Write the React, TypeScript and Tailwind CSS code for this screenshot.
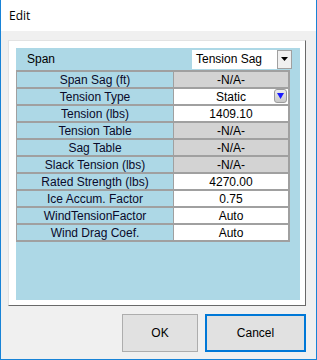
import React from 'react';

type Row = { label: string; value: string; kind: 'gray' | 'white' | 'combo' };

const rows: Row[] = [
    { label: 'Span Sag (ft)', value: '-N/A-', kind: 'gray' },
    { label: 'Tension Type', value: 'Static', kind: 'combo' },
    { label: 'Tension (lbs)', value: '1409.10', kind: 'white' },
    { label: 'Tension Table', value: '-N/A-', kind: 'gray' },
    { label: 'Sag Table', value: '-N/A-', kind: 'gray' },
    { label: 'Slack Tension (lbs)', value: '-N/A-', kind: 'gray' },
    { label: 'Rated Strength (lbs)', value: '4270.00', kind: 'white' },
    { label: 'Ice Accum. Factor', value: '0.75', kind: 'white' },
    { label: 'WindTensionFactor', value: 'Auto', kind: 'white' },
    { label: 'Wind Drag Coef.', value: 'Auto', kind: 'white' },
];

const App: React.FC = () => {
    return (
        <div className="w-[317px] h-[360px] bg-[#f0f0f0] border-x border-b border-[#1883d7] flex flex-col font-['Liberation_Sans',Arial,sans-serif] text-[12px] text-black overflow-hidden">
            {/* Title bar */}
            <div className="h-[31px] bg-white flex items-center pl-[8px] shrink-0">
                <span className="font-['Open_Sans','Noto_Sans',sans-serif] text-[12px]">Edit</span>
            </div>

            {/* Panel */}
            <div className="mt-[9px] ml-[7px] mr-[10px] h-[266px] border-t border-l border-[#e3e3e3] border-r border-b border-r-[#696969] border-b-[#696969] bg-white pl-[7px] pt-[7px] pr-[5px] pb-[5px] flex">
                <div className="flex-1 bg-[#add8e6] flex flex-col">
                    {/* Span row */}
                    <div className="h-[22px] flex items-center justify-between pl-[11px] pr-[8px]">
                        <span>Span</span>
                        <div className="flex items-center h-[19px]">
                            <div className="w-[85px] h-full bg-white flex items-center pl-[4px]">Tension Sag</div>
                            <div className="w-[15px] h-full bg-[#f0f0f0] border border-[#a0a0a0] flex items-center justify-center">
                                <svg width="7" height="4" viewBox="0 0 7 4">
                                    <path d="M0 0 L7 0 L3.5 4 Z" fill="#000" />
                                </svg>
                            </div>
                        </div>
                    </div>

                    {/* Property grid */}
                    <div className="w-[274px] border-t-2 border-l border-r-2 border-[#a0a0a0] flex flex-col">
                        {rows.map((row) => (
                            <div key={row.label} className="flex h-[17px] border-b-2 border-[#a0a0a0]">
                                <div className="w-[157px] border-r border-[#a0a0a0] flex items-center justify-center leading-none text-[#0a0a2a]">
                                    {row.label}
                                </div>
                                <div
                                    className={`flex-1 flex items-center justify-center leading-none relative ${row.kind === 'gray' ? 'bg-[#d3d3d3]' : 'bg-white'}`}
                                >
                                    {row.value}
                                    {row.kind === 'combo' && (
                                        <div className="absolute right-[1px] top-[0px] w-[13px] h-[14px] rounded-[3px] border border-[#9c9c9c] bg-gradient-to-b from-[#ececec] to-[#c8c8c8] flex items-center justify-center">
                                            <svg width="7" height="6" viewBox="0 0 7 6">
                                                <path d="M0 0 L7 0 L3.5 6 Z" fill="#1a1aff" />
                                            </svg>
                                        </div>
                                    )}
                                </div>
                            </div>
                        ))}
                    </div>
                </div>
            </div>

            {/* Buttons */}
            <div className="mt-[8px] mr-[10px] flex justify-end gap-[7px]">
                <button className="w-[76px] h-[38px] bg-[#e1e1e1] border border-[#adadad] flex items-center justify-center">
                    OK
                </button>
                <button className="w-[101px] h-[38px] bg-[#e1e1e1] border-2 border-[#0078d7] flex items-center justify-center">
                    Cancel
                </button>
            </div>
        </div>
    );
};

export default App;
